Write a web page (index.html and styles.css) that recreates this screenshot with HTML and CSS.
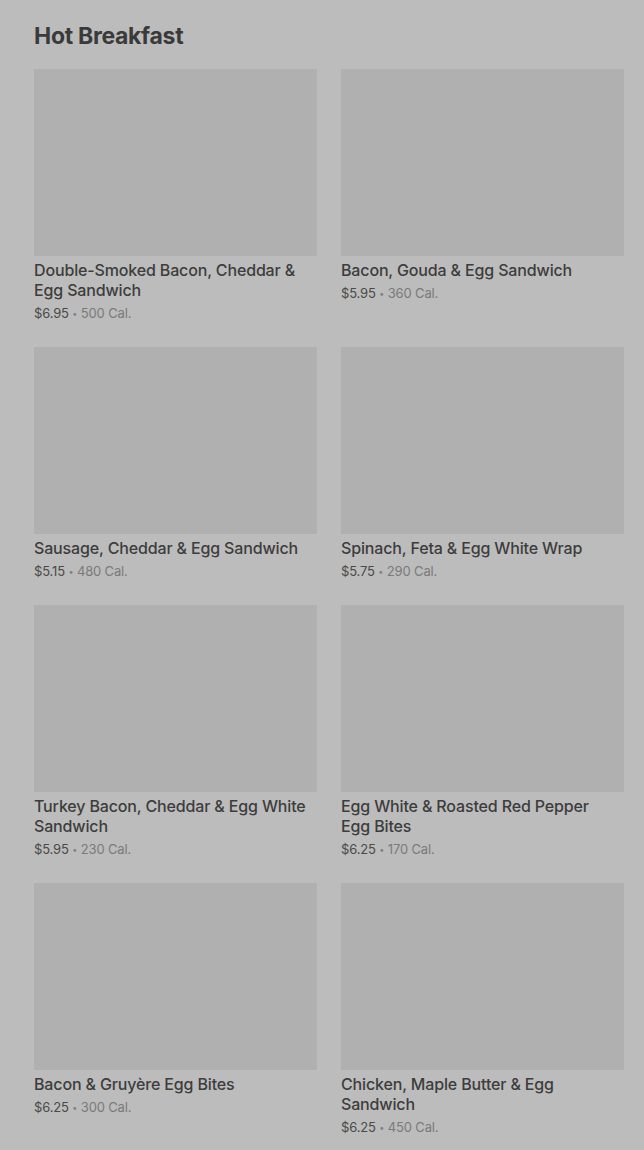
FILE: index.html
```html
<!DOCTYPE html>
<html>
<head>
<meta charset="utf-8">
<link rel="stylesheet" href="styles.css">
</head>
<body>
<main class="page">
  <h2 class="section-title">Hot Breakfast</h2>
  <div class="grid">
    <div class="item"><div class="thumb"></div><div class="name">Double-Smoked Bacon, Cheddar &amp; Egg Sandwich</div><div class="meta"><span class="price">$6.95</span> <span class="dot">•</span> <span class="cal">500 Cal.</span></div></div>
    <div class="item"><div class="thumb"></div><div class="name">Bacon, Gouda &amp; Egg Sandwich</div><div class="meta"><span class="price">$5.95</span> <span class="dot">•</span> <span class="cal">360 Cal.</span></div></div>
    <div class="item"><div class="thumb"></div><div class="name">Sausage, Cheddar &amp; Egg Sandwich</div><div class="meta"><span class="price">$5.15</span> <span class="dot">•</span> <span class="cal">480 Cal.</span></div></div>
    <div class="item"><div class="thumb"></div><div class="name">Spinach, Feta &amp; Egg White Wrap</div><div class="meta"><span class="price">$5.75</span> <span class="dot">•</span> <span class="cal">290 Cal.</span></div></div>
    <div class="item"><div class="thumb"></div><div class="name">Turkey Bacon, Cheddar &amp; Egg White Sandwich</div><div class="meta"><span class="price">$5.95</span> <span class="dot">•</span> <span class="cal">230 Cal.</span></div></div>
    <div class="item"><div class="thumb"></div><div class="name">Egg White &amp; Roasted Red Pepper Egg Bites</div><div class="meta"><span class="price">$6.25</span> <span class="dot">•</span> <span class="cal">170 Cal.</span></div></div>
    <div class="item"><div class="thumb"></div><div class="name">Bacon &amp; Gruyère Egg Bites</div><div class="meta"><span class="price">$6.25</span> <span class="dot">•</span> <span class="cal">300 Cal.</span></div></div>
    <div class="item"><div class="thumb"></div><div class="name">Chicken, Maple Butter &amp; Egg Sandwich</div><div class="meta"><span class="price">$6.25</span> <span class="dot">•</span> <span class="cal">450 Cal.</span></div></div>
  </div>
</main>
</body>
</html>
```
FILE: styles.css
```css
html, body {
  margin: 0;
  padding: 0;
  background: #bcbcbc;
}
body {
  font-family: Inter, "Noto Sans", Roboto, sans-serif;
  color: #3b3b3b;
}
.page {
  padding: 21px 20px 0 34px;
}
.section-title {
  margin: 0 0 18px 0;
  font-size: 23px;
  line-height: 30px;
  font-weight: 700;
  letter-spacing: -0.3px;
  color: #3a3a3a;
}
.grid {
  display: grid;
  grid-template-columns: 283px 283px;
  column-gap: 24px;
  row-gap: 25px;
}
.item {
  display: flex;
  flex-direction: column;
}
.thumb {
  height: 187px;
  background: #b0b0b0;
}
.name {
  margin-top: 4px;
  padding-right: 4px;
  font-size: 16px;
  line-height: 20px;
  font-weight: 500;
  letter-spacing: -0.15px;
  color: #3d3d3d;
}
.meta {
  margin-top: 4px;
  height: 18px;
  font-size: 13px;
  line-height: 18px;
  letter-spacing: -0.15px;
}
.price {
  color: #4a4a4a;
}
.dot {
  font-size: 9px;
  line-height: 0;
  color: #808080;
  vertical-align: 1px;
}
.cal {
  color: #7a7a7a;
}
```
